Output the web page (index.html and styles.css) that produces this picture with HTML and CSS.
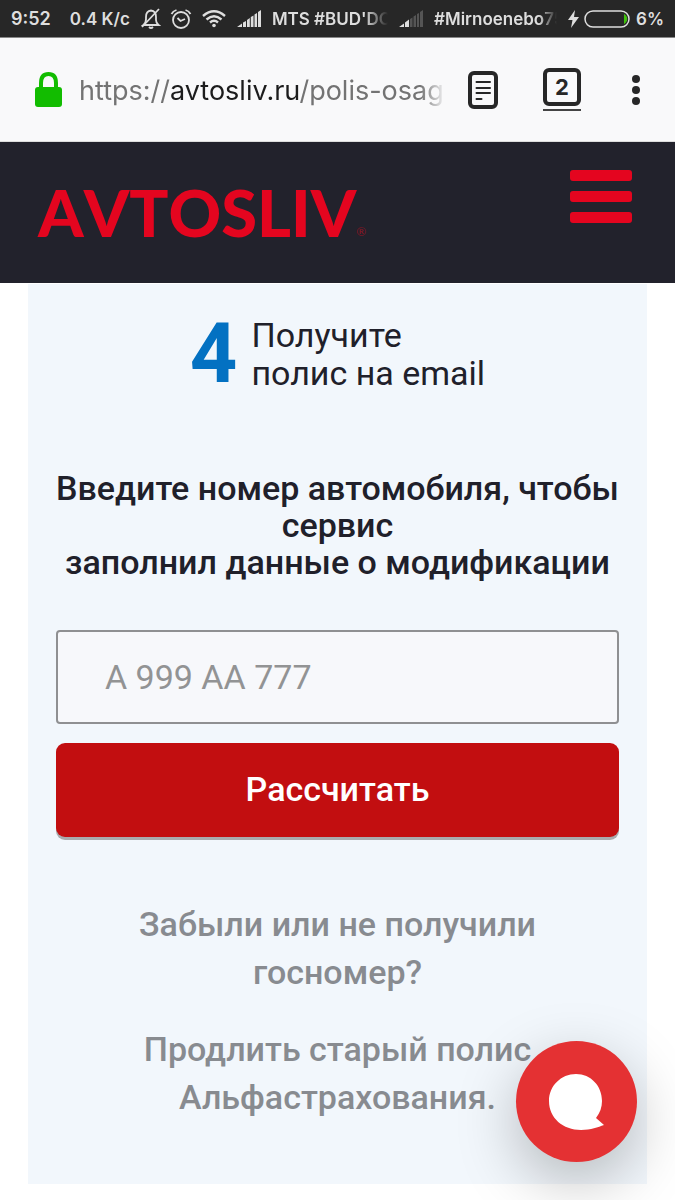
FILE: index.html
```html
<!DOCTYPE html>
<html lang="ru">
<head>
<meta charset="utf-8">
<meta name="viewport" content="width=device-width, initial-scale=1">
<title>Avtosliv</title>
<link rel="stylesheet" href="styles.css">
</head>
<body>
<div class="status">
  <span class="time">9:52</span>
  <span class="speed">0.4 K/c</span>
  <svg class="bell" width="20" height="22" viewBox="0 0 20 22" fill="none" stroke="#dedede" stroke-width="1.8"><path d="M2.500 17 Q5 15 5 11 V9 Q5 3 10 2.500 Q15 3 15 9 V12 Q15 15 17.500 17 Z"/><path d="M1 19 L18 1"/><path d="M8 19 Q10 21 12 19"/></svg>
  <svg class="alarm" width="22" height="22" viewBox="0 0 22 22" fill="none" stroke="#dedede" stroke-width="1.800"><circle cx="11" cy="12" r="8"/><path d="M7.500 10 L10.500 13 L15 11"/><path d="M1.500 6 Q3 3 6.500 2 M15.500 2 Q19 3 20.500 6"/></svg>
  <svg class="wifi" width="24" height="18" viewBox="0 0 24 18" fill="none" stroke="#dedede" stroke-width="2.400"><path d="M1 6 Q12 -3.500 23 6"/><path d="M4.500 9.500 Q12 3 19.500 9.500"/><path d="M8 12.500 Q12 9 16 12.500"/><circle cx="12" cy="15.500" r="1.800" fill="#dedede" stroke="none"/></svg>
  <svg class="signal" width="24" height="17" viewBox="0 0 24 17" fill="#dedede"><path d="M0 17 L5 13.500 V17Z M6 12.500 L9 11 V17H6Z M10 10 L12.800 8 V17H10Z M13.800 7 L16.500 5.500 V17H13.800Z M17.500 4.500 L20 3 V17H17.500Z M21 2 L24 0 V17H21Z"/></svg>
  <span class="carrier first">MTS #BUD'DO</span>
  <svg class="signal" width="24" height="17" viewBox="0 0 24 17"><path fill="#dedede" d="M0 17 L5 13.500 V17Z M6 12.500 L10 9.500 V17H6Z"/><path fill="#555" d="M11 9 L13.500 7.500 V17H11Z M14.500 6.500 L17 5 V17H14.500Z M18 4 L20 3 V17H18Z M21 2 L24 0 V17H21Z"/></svg>
  <span class="carrier second">#Mirnoenebo75</span>
  <svg class="bolt" width="11" height="18" viewBox="0 0 11 18" fill="#dedede"><path d="M7 0 L0 10 H4.500 L3 18 L11 7 H6Z"/></svg>
  <svg class="battery" width="46" height="18" viewBox="0 0 46 18"><rect x="1" y="1" width="44" height="16" rx="8" fill="none" stroke="#dedede" stroke-width="1.500"/><path d="M40.500 4.500 Q45 9 40.500 13.500Z" fill="#3fc20b" stroke="#3fc20b"/></svg>
  <span>6%</span>
</div>
<div class="browser">
  <svg class="lock" width="27" height="35" viewBox="0 0 27 35"><path d="M6 17 V11 Q6 2 13.500 2 Q21 2 21 11 V17" fill="none" stroke="#12bc00" stroke-width="4"/><rect y="15" width="27" height="20" rx="3" fill="#12bc00"/></svg>
  <div class="url">https://<span class="host">avtosliv.ru</span>/polis-osag</div>
  <button class="tool" type="button" aria-label="Режим чтения">
    <svg width="30" height="38" viewBox="0 0 30 38" fill="none" stroke="#272727" stroke-linecap="round"><rect x="2" y="2" width="26" height="34" rx="4" stroke-width="4"/><path stroke-width="2" d="M8.500 11 H22 M8.500 17 H22 M8.500 22 H22 M8.500 28 H13.500"/></svg>
  </button>
  <button class="tabs" type="button" aria-label="Вкладки"><span class="count">2</span></button>
  <button class="tool" type="button" aria-label="Меню">
    <svg width="8" height="30" viewBox="0 0 8 30" fill="#272727"><circle cx="4" cy="4" r="4"/><circle cx="4" cy="15" r="4"/><circle cx="4" cy="26" r="4"/></svg>
  </button>
</div>
<header class="header">
  <a class="logo" href="#">AVTOSLIV<span class="reg">®</span></a>
  <button class="burger" type="button" aria-label="Открыть меню"><span class="line"></span><span class="line"></span><span class="line"></span></button>
</header>
<main class="panel">
  <div class="step">
    <span class="number">4</span>
    <p class="caption">Получите<br>полис на email</p>
  </div>
  <form class="form">
    <label class="title" for="plate">Введите номер автомобиля, чтобы сервис<br>заполнил данные о модификации</label>
    <input class="plate" id="plate" type="text" placeholder="А 999 АА 777">
    <button class="submit" type="button">Рассчитать</button>
  </form>
  <nav class="links">
    <a class="link" href="#">Забыли или не получили<br>госномер?</a>
    <a class="link" href="#">Продлить старый полис<br>Альфастрахования.</a>
  </nav>
</main>
<button class="chat" type="button" aria-label="Чат">
  <svg width="56" height="56" viewBox="0 0 56 56" fill="#fff"><path d="M27 0 C12 0 0 12 0 27 C0 44 14 56 32 56 C42 56 49 53 55 51 L47 44 C51 39 53 33 53 27 C53 12 42 0 27 0Z"/></svg>
</button>
</body>
</html>
```
FILE: styles.css
```css
* { box-sizing: border-box; }
body { margin: 0; background: #fff; color: #20202a; font-family: Roboto, "Noto Sans", sans-serif; font-size: 34px; line-height: 38px; }
button { border: 0; padding: 0; background: none; font: inherit; }
svg { display: block; flex: none; }

.status { display: flex; align-items: center; height: 38px; padding: 0 11px; border-bottom: 1px solid #888; background: #272727; color: #dedede; font: 600 17px/22px Inter, sans-serif; white-space: nowrap; }
.time { font-size: 18px; }
.speed { margin-left: 19px; }
.bell { margin-left: 11px; }
.alarm { margin-left: 9px; }
.wifi { margin-left: 10px; }
.signal { margin-left: 11px; }
.carrier { margin-left: 11px; overflow: hidden; }
.first { width: 118px; mask-image: linear-gradient(to right, #000 80%, transparent); }
.second { width: 125px; mask-image: linear-gradient(to right, #000 85%, transparent); }
.bolt { margin-left: 11px; }
.battery { margin: 0 6px 0 5px; }

.browser { display: flex; align-items: center; height: 104px; padding: 0 35px; background: #f9f9fa; border-bottom: 1px solid #ddd; }
.url { flex: 1; min-width: 0; margin: 2px 22px 0 17px; overflow: hidden; color: #737373; font: 400 27px/40px Inter, sans-serif; white-space: nowrap; mask-image: linear-gradient(to right, #000 93%, transparent); }
.host { color: #1c1c1c; }
.tabs { margin: 0 51px 0 45px; padding-bottom: 3px; border-bottom: 2px solid #444; }
.count { display: flex; align-items: center; justify-content: center; width: 38px; height: 38px; border: 4px solid #272727; border-radius: 6px; color: #272727; font: 700 22px/28px Inter, sans-serif; }

.header { display: flex; align-items: flex-start; justify-content: space-between; height: 141px; padding: 28px 43px 0 38px; background: #22222c; }
.logo { display: flex; align-items: flex-end; padding-top: 10px; color: #e4051f; font: 900 65px/64px Lato, sans-serif; font-kerning: none; text-decoration: none; }
.reg { color: #8e1424; font: 400 12px/24px Lato, sans-serif; }
.burger { display: grid; gap: 10px; width: 62px; }
.line { height: 11px; border-radius: 3px; background: #e4051f; }

.panel { margin: 1px 28px 16px; padding: 32px 28px 63px; background: #f2f7fc; }
.step { display: flex; align-items: center; justify-content: center; gap: 14px; }
.number { color: #0371c2; font-size: 83px; font-weight: 700; line-height: 76px; }
.caption { margin: 0; }
.form { display: grid; margin-top: 78px; }
.title { font-weight: 500; line-height: 37px; text-align: center; }
.plate { width: 100%; height: 94px; margin-top: 49px; padding: 0 47px; border: 2px solid #8f9092; border-radius: 4px; background: #f7f8fb; color: #20202a; font: inherit; }
.plate::placeholder { color: #929394; opacity: 1; }
.submit { height: 94px; margin-top: 19px; padding-bottom: 2px; border-radius: 9px; background: #c20e10; box-shadow: 0 3px 0 #a9abae; color: #fff; font-weight: 500; }
.links { display: grid; gap: 29px; margin-top: 63px; text-align: center; }
.link { color: #888b90; font-weight: 500; line-height: 48px; text-decoration: none; }

.chat { position: fixed; right: 38px; bottom: 38px; display: flex; align-items: center; justify-content: center; width: 121px; height: 121px; border-radius: 50%; background: #e43133; box-shadow: 0 20px 60px rgba(0, 0, 0, .25); }
```
